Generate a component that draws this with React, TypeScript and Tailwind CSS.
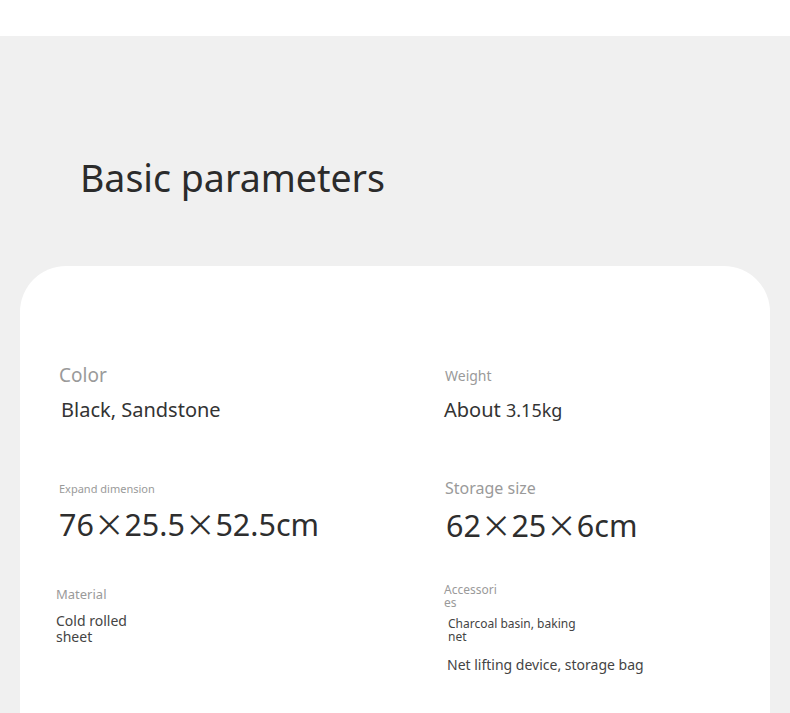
const font = { fontFamily: '"Noto Sans", "Open Sans", sans-serif' };
const cjk = { fontFamily: '"Noto Sans CJK SC", sans-serif' };

const Times = () => <span style={cjk}>×</span>;

export default function App() {
  return (
    <div className="w-full min-h-[713px] bg-[#f0f0f0] overflow-hidden" style={font}>
      <div className="h-[36px] bg-white" />
      <div className="pt-[116px] pl-[80px] h-[230px]">
        <h1 className="text-[37.5px] leading-[52px] text-[#2b2b2b]">Basic parameters</h1>
      </div>
      <div className="mx-[20px] bg-white rounded-t-[46px] h-[460px] pt-[96px]">
        <div className="grid grid-cols-[424px_1fr]">
          {/* row 1 */}
          <div className="pl-[39px] h-[116px]">
            <div className="text-[19px] leading-[26px] text-[#9a9a9a]">Color</div>
            <div className="mt-[9px] ml-[2px] text-[20px] leading-[26px] text-[#333]">Black, Sandstone</div>
          </div>
          <div className="pt-[4px]">
            <div className="ml-[1px] text-[14px] leading-[20px] text-[#9a9a9a]">Weight</div>
            <div className="mt-[11px] text-[20px] leading-[26px] text-[#333]">
              About <span className="text-[18px]">3.15kg</span>
            </div>
          </div>
          {/* row 2 */}
          <div className="pl-[39px] h-[100px]">
            <div className="pt-[3px] text-[11px] leading-[16px] text-[#9a9a9a]">Expand dimension</div>
            <div className="mt-[5px] text-[30.5px] leading-[42px] text-[#2e2e2e]">
              76<Times />25.5<Times />52.5cm
            </div>
          </div>
          <div className="pl-[1px] -mt-[1px]">
            <div className="text-[16px] leading-[22px] text-[#9a9a9a]">Storage size</div>
            <div className="mt-[4px] ml-[1px] text-[30.5px] leading-[42px] text-[#2e2e2e]">
              62<Times />25<Times />6cm
            </div>
          </div>
          {/* row 3 */}
          <div className="pl-[36px] pt-[7px]">
            <div className="text-[13px] leading-[18px] text-[#9a9a9a]">Material</div>
            <div className="mt-[10px] w-[80px] text-[14px] leading-[16px] text-[#444]">Cold rolled sheet</div>
          </div>
          <div className="pt-[5px]">
            <div className="w-[54px] text-[12px] leading-[13px] text-[#9a9a9a] break-all">Accessories</div>
            <div className="mt-[8px] ml-[4px] w-[135px] text-[12px] leading-[13px] text-[#444]">Charcoal basin, baking net</div>
            <div className="mt-[13px] ml-[3px] text-[14px] leading-[18px] text-[#444]">Net lifting device, storage bag</div>
          </div>
        </div>
      </div>
    </div>
  );
}
